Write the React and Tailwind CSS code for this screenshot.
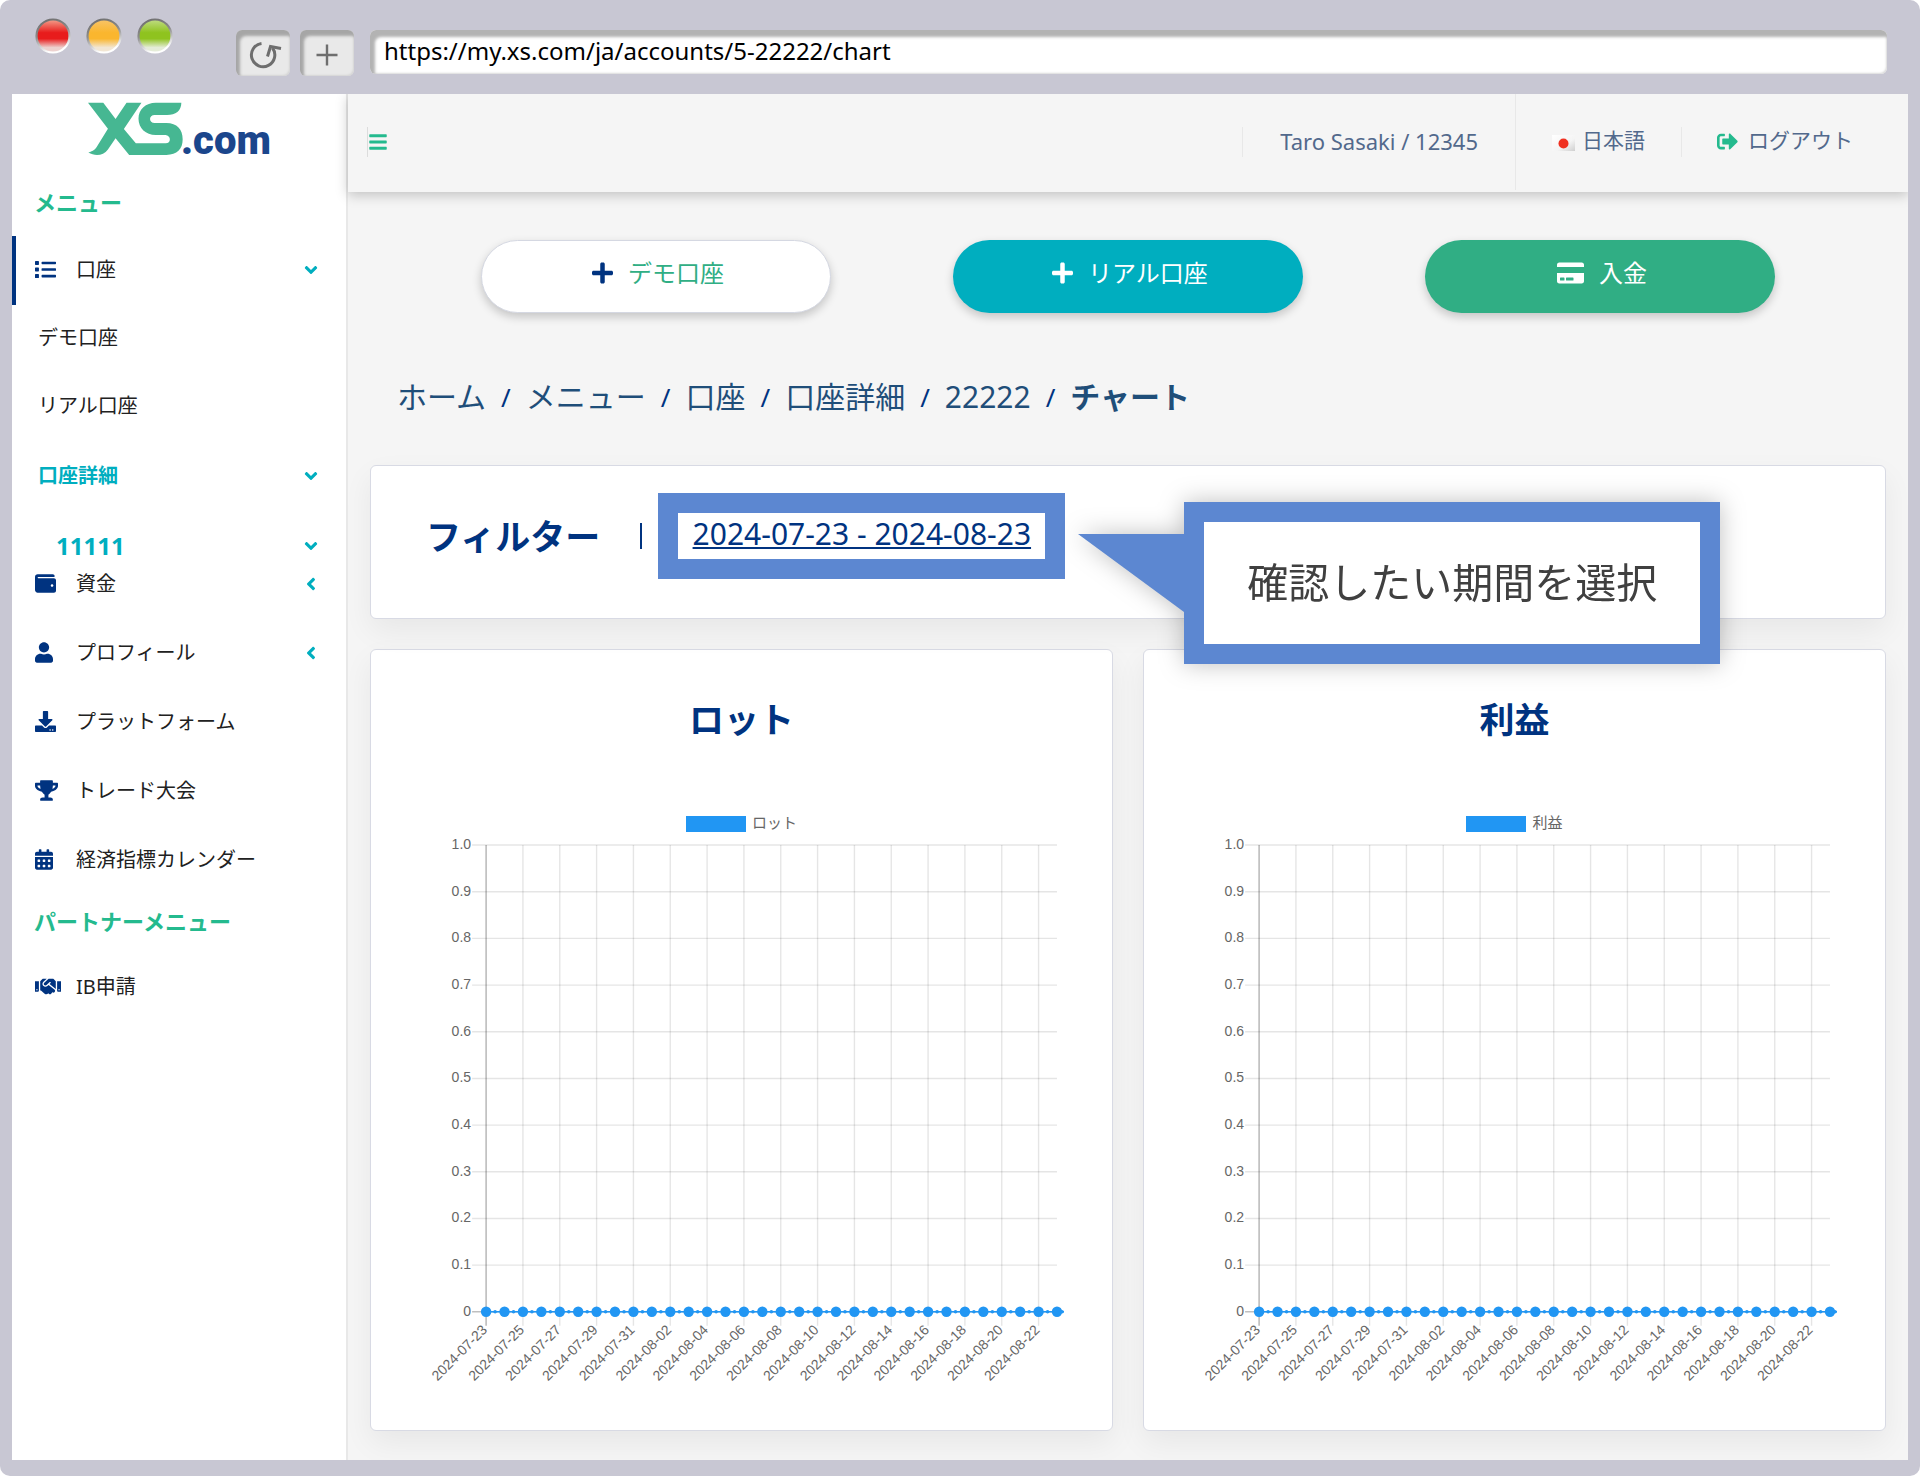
import React from "react";
import {
  FaAngleDown,
  FaAngleLeft,
  FaBars,
  FaCalendarAlt,
  FaCreditCard,
  FaDownload,
  FaHandshake,
  FaList,
  FaPlus,
  FaSignOutAlt,
  FaTrophy,
  FaUser,
  FaWallet,
} from "react-icons/fa";

function Light({ id, color, top, bottom, label }) {
  return (
    <button type="button" aria-label={label} className="size-9">
      <svg viewBox="0 0 36 36" className="size-full">
        <defs>
          <linearGradient id={`${id}-fill`} x1="0" y1="0" x2="0" y2="1">
            <stop offset="0" stopColor={top} />
            <stop offset="0.4" stopColor={color} />
            <stop offset="0.58" stopColor={color} />
            <stop offset="0.85" stopColor={bottom} />
            <stop offset="1" stopColor={bottom} />
          </linearGradient>
          <linearGradient id={`${id}-ring`} x1="0" y1="0" x2="0.3" y2="1">
            <stop offset="0" stopColor="#6b6b6b" />
            <stop offset="0.5" stopColor="#8c8c8c" />
            <stop offset="1" stopColor="#ffffff" />
          </linearGradient>
        </defs>
        <circle cx="18" cy="18" r="16.5" fill={`url(#${id}-fill)`} stroke={`url(#${id}-ring)`} strokeWidth="2.2" />
      </svg>
    </button>
  );
}

const toolButton =
  "mt-3 flex h-[46px] w-[54px] items-center justify-center rounded-md bg-[#e9e9e9] text-[#6e6e6e] shadow-[inset_4px_6px_3px_#a6a6a6,inset_-1px_-1px_2px_#d4d4d4]";

function BrowserBar() {
  return (
    <div className="flex h-[94px] shrink-0 items-start pt-[18px] pr-[33px] pl-[35px]">
      <div className="flex gap-[15px]">
        <Light id="close" label="閉じる" color="#e81c1c" top="#f3a08c" bottom="#edd2cf" />
        <Light id="min" label="最小化" color="#fab62e" top="#f8c469" bottom="#f2e6d3" />
        <Light id="max" label="最大化" color="#8fc31f" top="#c0dc84" bottom="#e5ecd8" />
      </div>
      <button type="button" aria-label="再読み込み" className={`${toolButton} ml-[63px]`}>
        <svg viewBox="0 0 34 30" className="mt-1 h-[30px] w-[34px] overflow-visible" fill="none" stroke="currentColor" strokeWidth="3">
          <path d="M15.5 3.4 A11.7 11.7 0 1 0 26.5 8" />
          <path d="M21.5 16.5 L24.5 6.5 L35 8.5" />
        </svg>
      </button>
      <button type="button" aria-label="新しいタブ" className={`${toolButton} ml-2.5`}>
        <svg viewBox="0 0 22 22" className="mt-1 size-[22px]" stroke="currentColor" strokeWidth="2.4">
          <path d="M11 0.5V21.5M0.5 11H21.5" />
        </svg>
      </button>
      <input
        type="text"
        aria-label="アドレス"
        defaultValue="https://my.xs.com/ja/accounts/5-22222/chart"
        className="mt-3 ml-4 h-11 min-w-0 flex-1 rounded-md bg-white pb-1 pl-3.5 text-2xl text-black shadow-[inset_5px_7px_3px_#b3b3b3,inset_-1px_-1px_2px_#d9d9d9] outline-none"
      />
    </div>
  );
}

function Logo() {
  return (
    <a href="#" aria-label="XS.com" className="ml-19 mt-2 flex h-[54px] items-end">
      <svg viewBox="264 306 286 162" className="h-[54px] w-[95px] shrink-0" fill="#46b792">
        <path d="M264 308H310L347 357L380 308H425L372 387L408 430H498C515 430 515 405 495 405H468C438 405 416 384 416 356C416 328 438 308 468 308H545C545 332 528 345 502 345H465C446 345 446 369 465 369H500C532 369 549 388 549 418C549 448 532 465 500 465H388L347 415L324 449C310 468 285 470 265 458C280 453 286 448 292 438L324 386Z" />
      </svg>
      <span className="-ml-0.5 h-[54px] font-[Roboto,sans-serif] text-[40px] leading-[78px] font-black text-[#1b468c]">
        .com
      </span>
    </a>
  );
}

function NavItem({ icon: Icon, iconClass, label, arrow, active }) {
  return (
    <a
      href="#"
      className={`flex h-[69px] items-center border-l-4 pr-[25px] pb-0.5 pl-[19px] text-xl text-[#212121] ${
        active ? "border-[#003380]" : "border-transparent"
      }`}
    >
      <span className="flex w-[41px] items-center text-[#003380]">
        <Icon className={iconClass} />
      </span>
      <span className="flex-1">{label}</span>
      {arrow === "down" && <FaAngleDown className="size-5 text-[#00aebf]" />}
      {arrow === "left" && <FaAngleLeft className="size-5 text-[#00aebf]" />}
    </a>
  );
}

function Sidebar() {
  return (
    <aside className="flex w-[336px] shrink-0 flex-col border-r-2 border-[#e8e8e8] bg-white">
      <Logo />
      <h2 className="mt-[30px] pl-[22px] text-[22px] leading-8 font-bold text-[#24ba8e]">メニュー</h2>
      <nav className="mt-[18px] flex flex-col">
        <NavItem icon={FaList} iconClass="size-[21px]" label="口座" arrow="down" active />
        <a href="#" className="flex h-[66px] items-center pl-[26px] text-xl text-[#212121]">
          デモ口座
        </a>
        <a href="#" className="flex h-[70px] items-center pl-[26px] text-xl text-[#212121]">
          リアル口座
        </a>
        <a href="#" className="flex h-[69px] items-center justify-between pr-[25px] pl-[26px] text-xl font-bold text-[#00aebf]">
          口座詳細
          <FaAngleDown className="size-5" />
        </a>
        <a href="#" className="flex h-10 items-center justify-between pt-8 pr-[25px] pl-[44px] text-2xl leading-2 font-bold text-[#00aebf]">
          11111
          <FaAngleDown className="size-5 shrink-0" />
        </a>
        <NavItem icon={FaWallet} iconClass="size-[21px]" label="資金" arrow="left" />
        <NavItem icon={FaUser} iconClass="h-[21px] w-[18px]" label="プロフィール" arrow="left" />
        <NavItem icon={FaDownload} iconClass="size-[21px]" label="プラットフォーム" />
        <NavItem icon={FaTrophy} iconClass="h-[21px] w-[23px]" label="トレード大会" />
        <NavItem icon={FaCalendarAlt} iconClass="h-[21px] w-[18px]" label="経済指標カレンダー" />
      </nav>
      <h2 className="mt-2.5 pl-[22px] text-[22px] leading-8 font-bold text-[#24ba8e]">パートナーメニュー</h2>
      <nav className="mt-4">
        <NavItem icon={FaHandshake} iconClass="h-[21px] w-[26px]" label="IB申請" />
      </nav>
    </aside>
  );
}

function Header() {
  return (
    <header className="relative z-10 flex h-[98px] items-center bg-[#f5f5f5] pb-0.5 text-[21px] text-[#52698c] shadow-[0_3px_12px_rgba(0,0,0,0.22)]">
      <button type="button" aria-label="メニュー切替" className="ml-[19px] flex h-[30px] items-center border-l border-[#dcdcdc] text-[#24ba8e]">
        <FaBars className="size-5" />
      </button>
      <div className="ml-auto flex h-full items-center">
        <span className="flex h-[30px] items-center border-l border-[#e8e8e8] px-[37px] pb-0.5 text-[22px]">Taro Sasaki / 12345</span>
        <button type="button" className="flex h-full items-center gap-[7px] border-l border-[#e8e8e8] px-9 pb-0.5">
          <svg viewBox="0 0 23 16" className="mt-1 h-4 w-[23px]" aria-hidden="true">
            <defs>
              <linearGradient id="flag" x1="0" y1="0" x2="1" y2="1">
                <stop offset="0" stopColor="#ffffff" />
                <stop offset="0.6" stopColor="#f4f4f4" />
                <stop offset="1" stopColor="#cfcfcf" />
              </linearGradient>
            </defs>
            <rect width="23" height="16" fill="url(#flag)" />
            <circle cx="11.5" cy="8.5" r="5" fill="#f03020" />
          </svg>
          日本語
        </button>
        <a href="#" className="flex h-[30px] items-center gap-2.5 border-l border-[#e8e8e8] pr-[55px] pb-0.5 pl-[35px]">
          <FaSignOutAlt className="size-[21px] text-[#24ba8e]" />
          ログアウト
        </a>
      </div>
    </header>
  );
}

function Actions() {
  const base =
    "flex h-[73px] w-full max-w-[350px] items-center justify-center gap-[15px] justify-self-center rounded-full pb-2 pl-1 text-2xl shadow-[0_4px_10px_rgba(0,0,0,0.2)]";
  return (
    <div className="grid grid-cols-3 px-[50px]">
      <button type="button" className={`${base} border border-[#d5d8e2] bg-white text-[#30ae84]`}>
        <FaPlus className="h-6 w-[21px] text-[#003380]" />
        デモ口座
      </button>
      <button type="button" className={`${base} bg-[#00aebf] text-white`}>
        <FaPlus className="h-6 w-[21px]" />
        リアル口座
      </button>
      <button type="button" className={`${base} bg-[#30ae84] text-white`}>
        <FaCreditCard className="h-6 w-[27px]" />
        入金
      </button>
    </div>
  );
}

function Breadcrumb() {
  const items = ["ホーム", "メニュー", "口座", "口座詳細", "22222"];
  return (
    <nav aria-label="パンくず" className="mt-[62px] flex items-center gap-[15px] pl-[27px] text-3xl leading-11 text-[#1f4e79]">
      {items.map((item) => (
        <React.Fragment key={item}>
          <a href="#">{item}</a>
          <span className="text-[26px] text-[#003380]">/</span>
        </React.Fragment>
      ))}
      <span aria-current="page" className="font-bold">
        チャート
      </span>
    </nav>
  );
}

const card =
  "rounded-md border border-[#d8dae4] bg-white shadow-[0_12px_30px_rgba(0,0,0,0.06)]";

function FilterCard() {
  return (
    <section className={`${card} relative z-10 mt-[46px] flex items-center pt-[27px] pb-[39px] pl-[55px]`}>
      <h2 className="pt-0.5 text-[35px] leading-12 font-bold text-[#003380]">フィルター</h2>
      <span className="ml-10 h-[26px] w-0.5 bg-[#003380]" />
      <div className="relative ml-4">
        <div className="flex h-[86px] w-[407px] items-center justify-center border-20 border-[#5c87d1] pb-1">
          <button type="button" className="text-3xl leading-10 whitespace-nowrap text-[#003380] underline decoration-2 underline-offset-2">
            2024-07-23 - 2024-08-23
          </button>
        </div>
        <div className="absolute top-[9px] left-[420px] flex items-start drop-shadow-[0_0_12px_rgba(0,0,0,0.25)]">
          <svg viewBox="0 0 106 78" className="mt-8 h-[78px] w-[106px] shrink-0" fill="#5c87d1">
            <path d="M0 0H106V78Z" />
          </svg>
          <p className="flex h-[162px] w-[536px] items-center justify-center border-20 border-[#5c87d1] bg-white text-[41px] whitespace-nowrap text-[#404040]">
            確認したい期間を選択
          </p>
        </div>
      </div>
    </section>
  );
}

const X0 = 65;
const X1 = 635;
const Y0 = 40;
const Y1 = 506;
const points = Array.from({ length: 32 }, (_, i) => {
  const date = new Date(Date.UTC(2024, 6, 23 + i));
  return { x: X0 + ((X1 - X0) * i) / 31, date: date.toISOString().slice(0, 10) };
});
const levels = Array.from({ length: 11 }, (_, i) => ({
  y: Y1 - ((Y1 - Y0) * i) / 10,
  label: i === 0 ? "0" : (i / 10).toFixed(1),
}));

function ChartCard({ title }) {
  return (
    <section className={`${card} px-[50px] pt-[46px] pb-11`}>
      <h2 className="text-center text-[35px] leading-12 font-bold text-[#003380]">{title}</h2>
      <div className="mt-[68px] flex h-5 items-center justify-center gap-1.5 text-[15px] text-[#666]">
        <span className="mt-1 h-4 w-[60px] bg-[#2196f3]" />
        {title}
      </div>
      <svg viewBox="0 0 640 580" className="-mt-[27px] w-full overflow-visible" role="img" aria-label={title}>
        {levels.map(({ y, label }) => (
          <g key={label}>
            <line x1={X0 - 14} x2={X1} y1={y} y2={y} stroke="#000" strokeOpacity={label === "0" ? 0.25 : 0.1} strokeWidth="1.4" />
            <text x={X0 - 15} y={y + 4} textAnchor="end" className="fill-[#666] font-['Liberation_Sans',Arial,sans-serif] text-[14px]">
              {label}
            </text>
          </g>
        ))}
        {points
          .filter((_, i) => i % 2 === 0)
          .map(({ x, date }, i) => (
            <g key={date}>
              <line x1={x} x2={x} y1={Y0} y2={Y1 + 14} stroke="#000" strokeOpacity={i === 0 ? 0.3 : 0.1} strokeWidth="1.4" />
              <text
                transform={`translate(${x + 2} ${Y1 + 19}) rotate(-45)`}
                textAnchor="end"
                className="fill-[#666] font-['Liberation_Sans',Arial,sans-serif] text-[14px]"
              >
                {date}
              </text>
            </g>
          ))}
        <line x1={X0} x2={X1 + 7} y1={Y1} y2={Y1} stroke="#2196f3" strokeWidth="1.6" />
        {points.map(({ x, date }) => (
          <g key={date} fill="#2196f3">
            <circle cx={x} cy={Y1} r="5.2" />
            <circle cx={x + (date === "2024-08-23" ? 5 : 9)} cy={Y1} r="1.8" />
          </g>
        ))}
      </svg>
    </section>
  );
}

export default function App() {
  return (
    <div className="bg-white font-['Noto_Sans','Noto_Sans_CJK_JP',sans-serif]">
      <div className="flex min-h-screen flex-col rounded-[10px] bg-[#c8c7d3] pb-4">
        <BrowserBar />
        <div className="mx-3 flex flex-1 overflow-hidden bg-[#f5f5f5]">
          <Sidebar />
          <div className="flex min-w-0 flex-1 flex-col">
            <Header />
            <main className="px-[22px] pt-12 pb-[29px]">
              <Actions />
              <Breadcrumb />
              <FilterCard />
              <div className="mt-[30px] grid grid-cols-2 gap-[30px]">
                <ChartCard title="ロット" />
                <ChartCard title="利益" />
              </div>
            </main>
          </div>
        </div>
      </div>
    </div>
  );
}
